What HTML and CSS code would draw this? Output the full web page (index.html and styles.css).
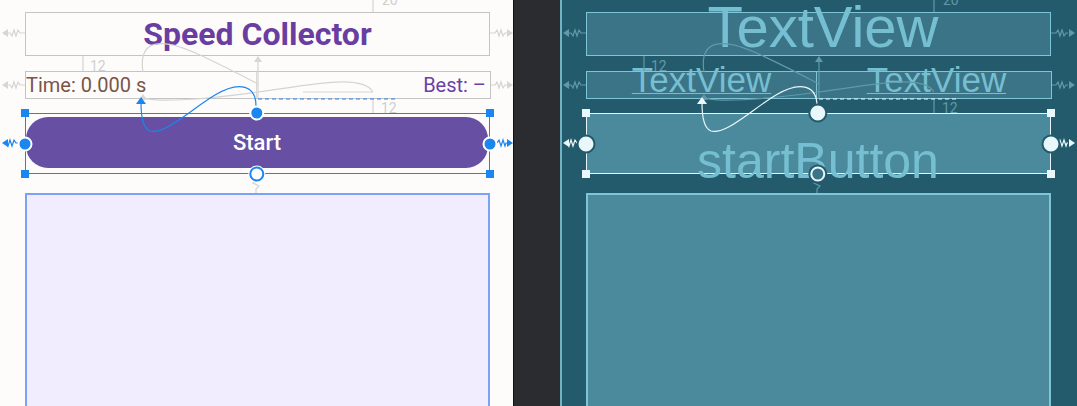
FILE: index.html
```html
<!DOCTYPE html>
<html lang="en">
    <head>
        <meta charset="UTF-8">
        <meta name="viewport" content="width=device-width, initial-scale=1.0">
        <title>activity_main.xml</title>
        <link rel="stylesheet" href="styles.css">
    </head>
    <body>
        <div class="editor">
            <!-- design surface -->
            <section class="canvas design">
                <div class="screen">
                    <div class="view title">Speed Collector</div>
                    <div class="view row">
                        <div class="cell time">Time: 0.000 s</div>
                        <div class="cell best">Best: –</div>
                    </div>
                    <div class="selected">
                        <div class="button">Start</div>
                        <span class="corner tl"></span>
                        <span class="corner tr"></span>
                        <span class="corner bl"></span>
                        <span class="corner br"></span>
                        <span class="anchor top"></span>
                        <span class="anchor left"></span>
                        <span class="anchor right"></span>
                        <span class="anchor bottom open"></span>
                    </div>
                    <div class="view list"></div>
                </div>

                <svg class="links" width="514" height="406" viewBox="0 0 514 406">
                    <g class="faint">
                        <path d="M25 33h-5l-2-3-2 6-2-6-2 6-2-3H8"/>
                        <path class="tip" d="M2 33l6-4v8z"/>
                        <path d="M25 85h-5l-2-3-2 6-2-6-2 6-2-3H8"/>
                        <path class="tip" d="M2 85l6-4v8z"/>
                        <path d="M490 33h5l2-3 2 6 2-6 2 6 2-3h2"/>
                        <path class="tip" d="M513 33l-6-4v8z"/>
                        <path d="M491 85h4l2-3 2 6 2-6 2 6 2-3h2"/>
                        <path class="tip" d="M513 85l-6-4v8z"/>
                        <path d="M83 56V71M373 0V12M373 99V113"/>
                        <path d="M143 72C138 40 160 36 200 55S250 80 258 84"/>
                        <path d="M143 97C150 103 200 100 258 92S362 74 373 92"/>
                        <path d="M258 58V99M303 92H373"/>
                        <path class="tip" d="M258 56l-4 6h8z"/>
                        <path class="tip" d="M143 94l-4 6h8z"/>
                        <path d="M256 180l-3 3 6 3-3 3V193"/>
                        <text x="90" y="71">12</text>
                        <text x="382" y="5">20</text>
                        <text x="381" y="113">12</text>
                    </g>
                    <g class="strong">
                        <path class="dash" d="M258 99H395"/>
                        <path d="M256 106C256 86 240 80 215 95C190 110 165 135 150 131C142 128 141 115 141 103"/>
                        <path class="tip" d="M141 97l-5 7h10z"/>
                        <path d="M18 143h-2l-2-3-2 6-2-6-2 6-1-3H7"/>
                        <path class="tip" d="M2 143l6-4v8z"/>
                        <path d="M496 143h1l2-3 2 6 2-6 2 6 1-3h1"/>
                        <path class="tip" d="M513 143l-6-4v8z"/>
                    </g>
                </svg>
            </section>

            <div class="gutter"></div>

            <!-- blueprint surface -->
            <section class="canvas blueprint">
                <div class="screen">
                    <div class="view title">TextView</div>
                    <div class="view row">
                        <div class="cell"><span>TextView</span></div>
                        <div class="cell"><span>TextView</span></div>
                    </div>
                    <div class="selected">
                        <div class="button">startButton</div>
                        <span class="corner tl"></span>
                        <span class="corner tr"></span>
                        <span class="corner bl"></span>
                        <span class="corner br"></span>
                        <span class="anchor top"></span>
                        <span class="anchor left"></span>
                        <span class="anchor right"></span>
                        <span class="anchor bottom open"></span>
                    </div>
                    <div class="view list"></div>
                </div>

                <svg class="links" width="515" height="406" viewBox="0 0 515 406">
                    <g transform="translate(-1 0)">
                        <g class="faint">
                            <path d="M25 33h-5l-2-3-2 6-2-6-2 6-2-3H8"/>
                            <path class="tip" d="M2 33l6-4v8z"/>
                            <path d="M25 85h-5l-2-3-2 6-2-6-2 6-2-3H8"/>
                            <path class="tip" d="M2 85l6-4v8z"/>
                            <path d="M490 33h5l2-3 2 6 2-6 2 6 2-3h2"/>
                            <path class="tip" d="M514 33l-6-4v8z"/>
                            <path d="M491 85h4l2-3 2 6 2-6 2 6 2-3h2"/>
                            <path class="tip" d="M514 85l-6-4v8z"/>
                            <path d="M83 56V71M373 0V12M373 99V113"/>
                            <path d="M143 72C138 40 160 36 200 55S250 80 258 84"/>
                            <path d="M143 97C150 103 200 100 258 92S362 74 373 92"/>
                            <path d="M258 58V99"/>
                            <path class="tip" d="M258 56l-4 6h8z"/>
                            <path class="tip" d="M143 94l-4 6h8z"/>
                            <path d="M256 180l-3 3 6 3-3 3V193"/>
                            <text x="90" y="71">12</text>
                            <text x="382" y="5">20</text>
                            <text x="381" y="113">12</text>
                        </g>
                        <g class="strong">
                            <path class="dash" d="M258 99H395"/>
                            <path d="M256 106C256 86 240 80 215 95C190 110 165 135 150 131C142 128 141 115 141 103"/>
                            <path class="tip" d="M141 97l-5 7h10z"/>
                            <path d="M18 143h-2l-2-3-2 6-2-6-2 6-1-3H7"/>
                            <path class="tip" d="M2 143l6-4v8z"/>
                            <path d="M496 143h1l2-3 2 6 2-6 2 6 1-3h1"/>
                            <path class="tip" d="M514 143l-6-4v8z"/>
                        </g>
                    </g>
                </svg>
            </section>
        </div>
    </body>
</html>
```

FILE: styles.css
```css
*{
    margin: 0;
    padding: 0;
    box-sizing: border-box;
}

body{
    width: 1077px;
    height: 406px;
    overflow: hidden;
    background-color: #2b2c30;
}

.editor{
    display: flex;
    height: 406px;
}

.canvas{
    position: relative;
    overflow: hidden;
    padding: 12px 0 0 25px;
}

.gutter{
    width: 46px;
    background-color: #2b2c30;
}

.screen{
    display: flex;
    flex-direction: column;
    width: 465px;
}

.view{
    border: 1px solid #c4c4c4;
}

.title{
    height: 44px;
    text-align: center;
    white-space: nowrap;
}

.row{
    display: flex;
    width: 466px;
    height: 28px;
    margin-top: 15px;
}

.cell{
    flex: 1;
    white-space: nowrap;
}

.cell + .cell{
    border-left: 1px solid #dadada;
}

.selected{
    position: relative;
    height: 61px;
    margin-top: 14px;
    padding: 3px 1px 0 0;
    border: 1px solid #1a86f0;
}

.button{
    height: 51px;
    white-space: nowrap;
    text-align: center;
}

.list{
    height: 240px;
    margin-top: 19px;
    border-width: 2px;
}

/* resize handles and constraint anchors */
.corner{
    position: absolute;
    z-index: 2;
    width: 8px;
    height: 8px;
}
.corner.tl{ left: -1px; top: -1px; transform: translate(-50%, -50%); }
.corner.tr{ right: -1px; top: -1px; transform: translate(50%, -50%); }
.corner.bl{ left: -1px; bottom: -1px; transform: translate(-50%, 50%); }
.corner.br{ right: -1px; bottom: -1px; transform: translate(50%, 50%); }

.anchor{
    position: absolute;
    z-index: 2;
    width: 15px;
    height: 15px;
    border-radius: 50%;
    border: 2px solid #fff;
}
.anchor.top{ left: 50%; top: -1px; transform: translate(-58%, -50%); }
.anchor.bottom{ left: 50%; bottom: -1px; transform: translate(-58%, 50%); }
.anchor.left{ left: -1px; top: 50%; transform: translate(-50%, -50%); }
.anchor.right{ right: -1px; top: 50%; transform: translate(50%, -50%); }

.links{
    position: absolute;
    left: 0;
    top: 0;
    z-index: 1;
    overflow: visible;
}

.links path{
    fill: none;
    stroke-width: 1.2;
}

.links text{
    font-family: Roboto, "Noto Sans", sans-serif;
    font-size: 14px;
}

.links .dash{
    stroke-dasharray: 4 3;
}

/* design view */
.design{
    width: 514px;
    background-color: #fdfcfb;
    border-right: 1px solid #111;
    font-family: Roboto, "Noto Sans", sans-serif;
}

.design .title{
    font-size: 32px;
    font-weight: bold;
    line-height: 42px;
    color: #6a3ea1;
}

.design .cell{
    font-size: 20px;
    line-height: 26px;
}

.design .time{
    color: #7a5548;
}

.design .best{
    padding-right: 4px;
    text-align: right;
    color: #6b3fa6;
}

.design .button{
    border-radius: 22px;
    background-color: #6750a4;
    color: white;
    font-size: 22px;
    font-weight: 500;
    line-height: 51px;
}

.design .list{
    background-color: #f1edfe;
    border-color: #7aa3f7;
}

.design .corner{
    background-color: #1a86f0;
}

.design .anchor{
    background-color: #1a86f0;
}

.design .anchor.open{
    background-color: #fff;
    border-color: #1a86f0;
    box-shadow: 0 0 0 1px #fff;
}

.design .faint path{ stroke: #d4d4d4; }
.design .faint .tip{ fill: #d6d6d6; stroke: none; }
.design .faint text{ fill: #cfcfcf; }
.design .strong path{ stroke: #1a86f0; }
.design .strong .tip{ fill: #1a86f0; stroke: none; }

/* blueprint view */
.blueprint{
    flex: 1;
    padding-left: 24px;
    background-color: #245b6c;
    border-left: 2px solid #6fb3c5;
    font-family: "Liberation Sans", Arial, sans-serif;
    color: #76bfd2;
}

.blueprint .view{
    background-color: #3b7486;
    border-color: #7ec5d7;
}

.blueprint .title{
    padding-left: 9px;
    font-size: 58px;
    line-height: 28px;
}

.blueprint .cell{
    text-align: center;
    font-size: 35px;
    line-height: 16px;
}

.blueprint .cell + .cell{
    padding-left: 5px;
    border-left-color: #7ec5d7;
}

.blueprint .cell span{
    text-decoration: underline;
    text-decoration-thickness: 1px;
    text-underline-offset: 1px;
}

.blueprint .selected{
    background-color: #4b8a9c;
    border-color: #e6f5fa;
}

.blueprint .button{
    padding-top: 16px;
    font-size: 50px;
    line-height: 56px;
}

.blueprint .list{
    background-color: #4b8a9c;
    border-color: #7ec5d7;
}

.blueprint .corner{
    background-color: #e9f7fb;
}

.blueprint .anchor{
    background-color: #e9f7fb;
    border-color: #e9f7fb;
    box-shadow: 0 0 0 2px #245b6c;
}

.blueprint .anchor.open{
    background-color: #3b7486;
    border-color: #e9f7fb;
}

.blueprint .faint path{ stroke: #5f99aa; }
.blueprint .faint .tip{ fill: #5f99aa; stroke: none; }
.blueprint .faint text{ fill: #5f99aa; }
.blueprint .strong path{ stroke: #eaf7fb; }
.blueprint .strong .tip{ fill: #eaf7fb; stroke: none; }
```
